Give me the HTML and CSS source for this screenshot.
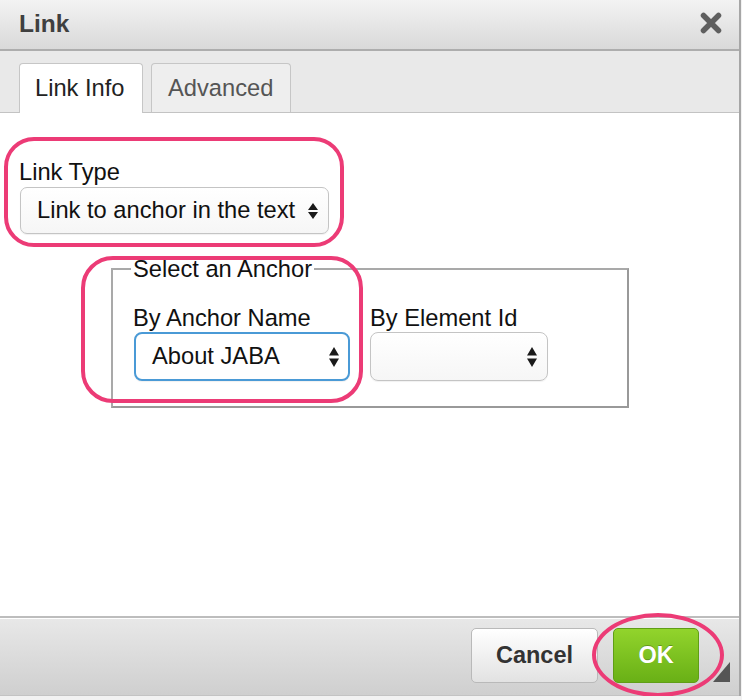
FILE: index.html
```html
<!DOCTYPE html>
<html lang="en">
<head>
<meta charset="utf-8">
<title>Link</title>
<link rel="stylesheet" href="styles.css">
</head>
<body>
<div class="dialog">
  <div class="titlebar">
    <span class="title">Link</span>
    <span class="close">
      <svg width="22" height="22" viewBox="0 0 22 22"><path d="M3.5 3.5 L18.5 18.5 M18.5 3.5 L3.5 18.5" stroke="#5f5f5f" stroke-width="5.5" stroke-linecap="round"/></svg>
    </span>
  </div>
  <div class="tabbar">
    <div class="tab tab-info active">Link Info</div>
    <div class="tab tab-adv">Advanced</div>
  </div>
  <div class="content">
    <div class="label">Link Type</div>
    <div class="select sel-type">
      <span>Link to anchor in the text</span>
      <svg class="arrows" width="10" height="16" viewBox="0 0 10 16"><path d="M0 7 L5 0 L10 7 Z M0 9 L10 9 L5 16 Z" fill="#1a1a1a"/></svg>
    </div>
    <fieldset class="anchors">
      <legend>Select an Anchor</legend>
      <div class="cols">
        <div class="col col-name">
          <div class="label">By Anchor Name</div>
          <div class="select sel-name">
            <span>About JABA</span>
            <svg class="arrows" width="10" height="20" viewBox="0 0 10 20"><path d="M0 8.5 L5 0 L10 8.5 Z M0 11.5 L10 11.5 L5 20 Z" fill="#1a1a1a"/></svg>
          </div>
        </div>
        <div class="col col-id">
          <div class="label">By Element Id</div>
          <div class="select sel-id">
            <span></span>
            <svg class="arrows" width="10" height="20" viewBox="0 0 10 20"><path d="M0 8.5 L5 0 L10 8.5 Z M0 11.5 L10 11.5 L5 20 Z" fill="#1a1a1a"/></svg>
          </div>
        </div>
      </div>
    </fieldset>
  </div>
  <div class="footer">
    <button class="btn btn-cancel">Cancel</button>
    <button class="btn btn-ok">OK</button>
    <svg class="resize" width="17" height="20" viewBox="0 0 17 20"><path d="M17 0 L17 20 L0 20 Z" fill="#555"/></svg>
  </div>
  <div class="mark mark-type"></div>
  <div class="mark mark-name"></div>
  <div class="mark mark-ok"></div>
</div>
</body>
</html>
```
FILE: styles.css
```css
html, body {
  margin: 0;
  padding: 0;
}
body {
  background: #f2f2f2;
  font-family: "Liberation Sans", Arial, sans-serif;
  color: #111;
}
.dialog {
  position: relative;
  width: 741px;
  height: 696px;
  box-sizing: border-box;
  border-right: 2px solid #a6a6a6;
  display: flex;
  flex-direction: column;
  background: #fff;
}
.titlebar {
  height: 51px;
  box-sizing: border-box;
  border-bottom: 2px solid #adadad;
  background: linear-gradient(#f3f3f3, #d9d9d9);
  display: flex;
  align-items: center;
  justify-content: space-between;
  padding: 0 17px 0 19px;
}
.title {
  font-weight: bold;
  font-size: 24.5px;
  line-height: 28px;
  color: #3f3f3f;
  margin-top: -2px;
}
.close {
  display: flex;
  margin-top: -4px;
}
.tabbar {
  height: 62px;
  box-sizing: border-box;
  background: #e9e9e9;
  border-bottom: 1px solid #c3c3c3;
  display: flex;
  align-items: flex-end;
  gap: 8px;
  padding-left: 19px;
}
.tab {
  height: 49px;
  box-sizing: border-box;
  border: 1px solid #c6c6c6;
  border-bottom: none;
  border-radius: 4px 4px 0 0;
  font-size: 23.7px;
  line-height: 48px;
  color: #555;
  background: #eeeeee;
}
.tab.active {
  height: 50px;
  margin-bottom: -1px;
  background: #fff;
  color: #222;
  position: relative;
}
.tab-info {
  width: 124px;
  padding-left: 15px;
  box-sizing: border-box;
}
.tab-adv {
  width: 140px;
  padding-left: 16px;
  box-sizing: border-box;
}
.content {
  flex: 1;
  padding: 45px 0 0 19px;
  background: #fff;
}
.label {
  font-size: 23.7px;
  line-height: 28px;
  color: #111;
}
.select {
  box-sizing: border-box;
  display: flex;
  align-items: center;
  justify-content: space-between;
  font-size: 23.7px;
  color: #111;
  background: linear-gradient(#ffffff, #f6f6f6);
  border: 1px solid #c4c4c4;
  border-radius: 7px;
  box-shadow: 0 1px 1px rgba(0,0,0,0.06);
}
.sel-type {
  width: 309px;
  height: 47px;
  margin: 1px 0 0 1px;
  padding: 0 10px 0 16px;
}
.anchors {
  width: 518px;
  box-sizing: border-box;
  margin: 21px 0 0 92px;
  padding: 21px 0 25px 20px;
  border: 2px solid #999;
  border-top-color: #a9a9a9;
  border-left-color: #a9a9a9;
  min-width: 0;
}
.anchors legend {
  font-size: 23.7px;
  line-height: 28px;
  padding: 0 2px;
  margin-left: -2px;
  color: #111;
}
.cols {
  display: flex;
  gap: 20px;
}
.col-name {
  width: 217px;
}
.col-id {
  width: 178px;
}
.sel-name {
  width: 216px;
  height: 49px;
  margin-left: 1px;
  padding: 0 9px 0 16px;
  border: 2px solid #4a9ad6;
  border-radius: 8px;
  background: #fff;
}
.sel-id {
  width: 178px;
  height: 49px;
  padding: 0 10px 0 16px;
  border-radius: 8px;
}
.arrows {
  flex: none;
}
.footer {
  position: relative;
  height: 80px;
  box-sizing: border-box;
  border-top: 2px solid #bdbdbd;
  border-bottom: 1px solid #c3c3c3;
  background: linear-gradient(#e8e8e8, #cfcfcf);
  box-shadow: inset 0 1px 0 #ffffff;
  display: flex;
  justify-content: flex-end;
  align-items: flex-start;
  gap: 15px;
  padding: 10px 40px 0 0;
}
.btn {
  font-family: "Liberation Sans", Arial, sans-serif;
  font-weight: bold;
  font-size: 23.5px;
  height: 55px;
  border-radius: 5px;
  padding: 0;
  cursor: pointer;
}
.btn-cancel {
  width: 127px;
  color: #333;
  border: 1px solid #b9b9b9;
  background: linear-gradient(#ffffff, #e2e2e2);
}
.btn-ok {
  width: 86px;
  color: #fff;
  border: 1px solid #5f9e16;
  background: linear-gradient(#92d42c, #69b016);
  text-shadow: 0 -1px 0 rgba(0,0,0,0.25);
}
.resize {
  position: absolute;
  right: 9px;
  bottom: 13px;
}
.mark {
  position: absolute;
  box-sizing: border-box;
  border: 4.5px solid #ec3b76;
  pointer-events: none;
}
.mark-type {
  left: 4px;
  top: 137px;
  width: 340px;
  height: 110px;
  border-radius: 30px;
}
.mark-name {
  left: 81px;
  top: 256px;
  width: 282px;
  height: 147px;
  border-radius: 32px;
}
.mark-ok {
  left: 592px;
  top: 613px;
  width: 132px;
  height: 84px;
  border-radius: 50%;
}
```
